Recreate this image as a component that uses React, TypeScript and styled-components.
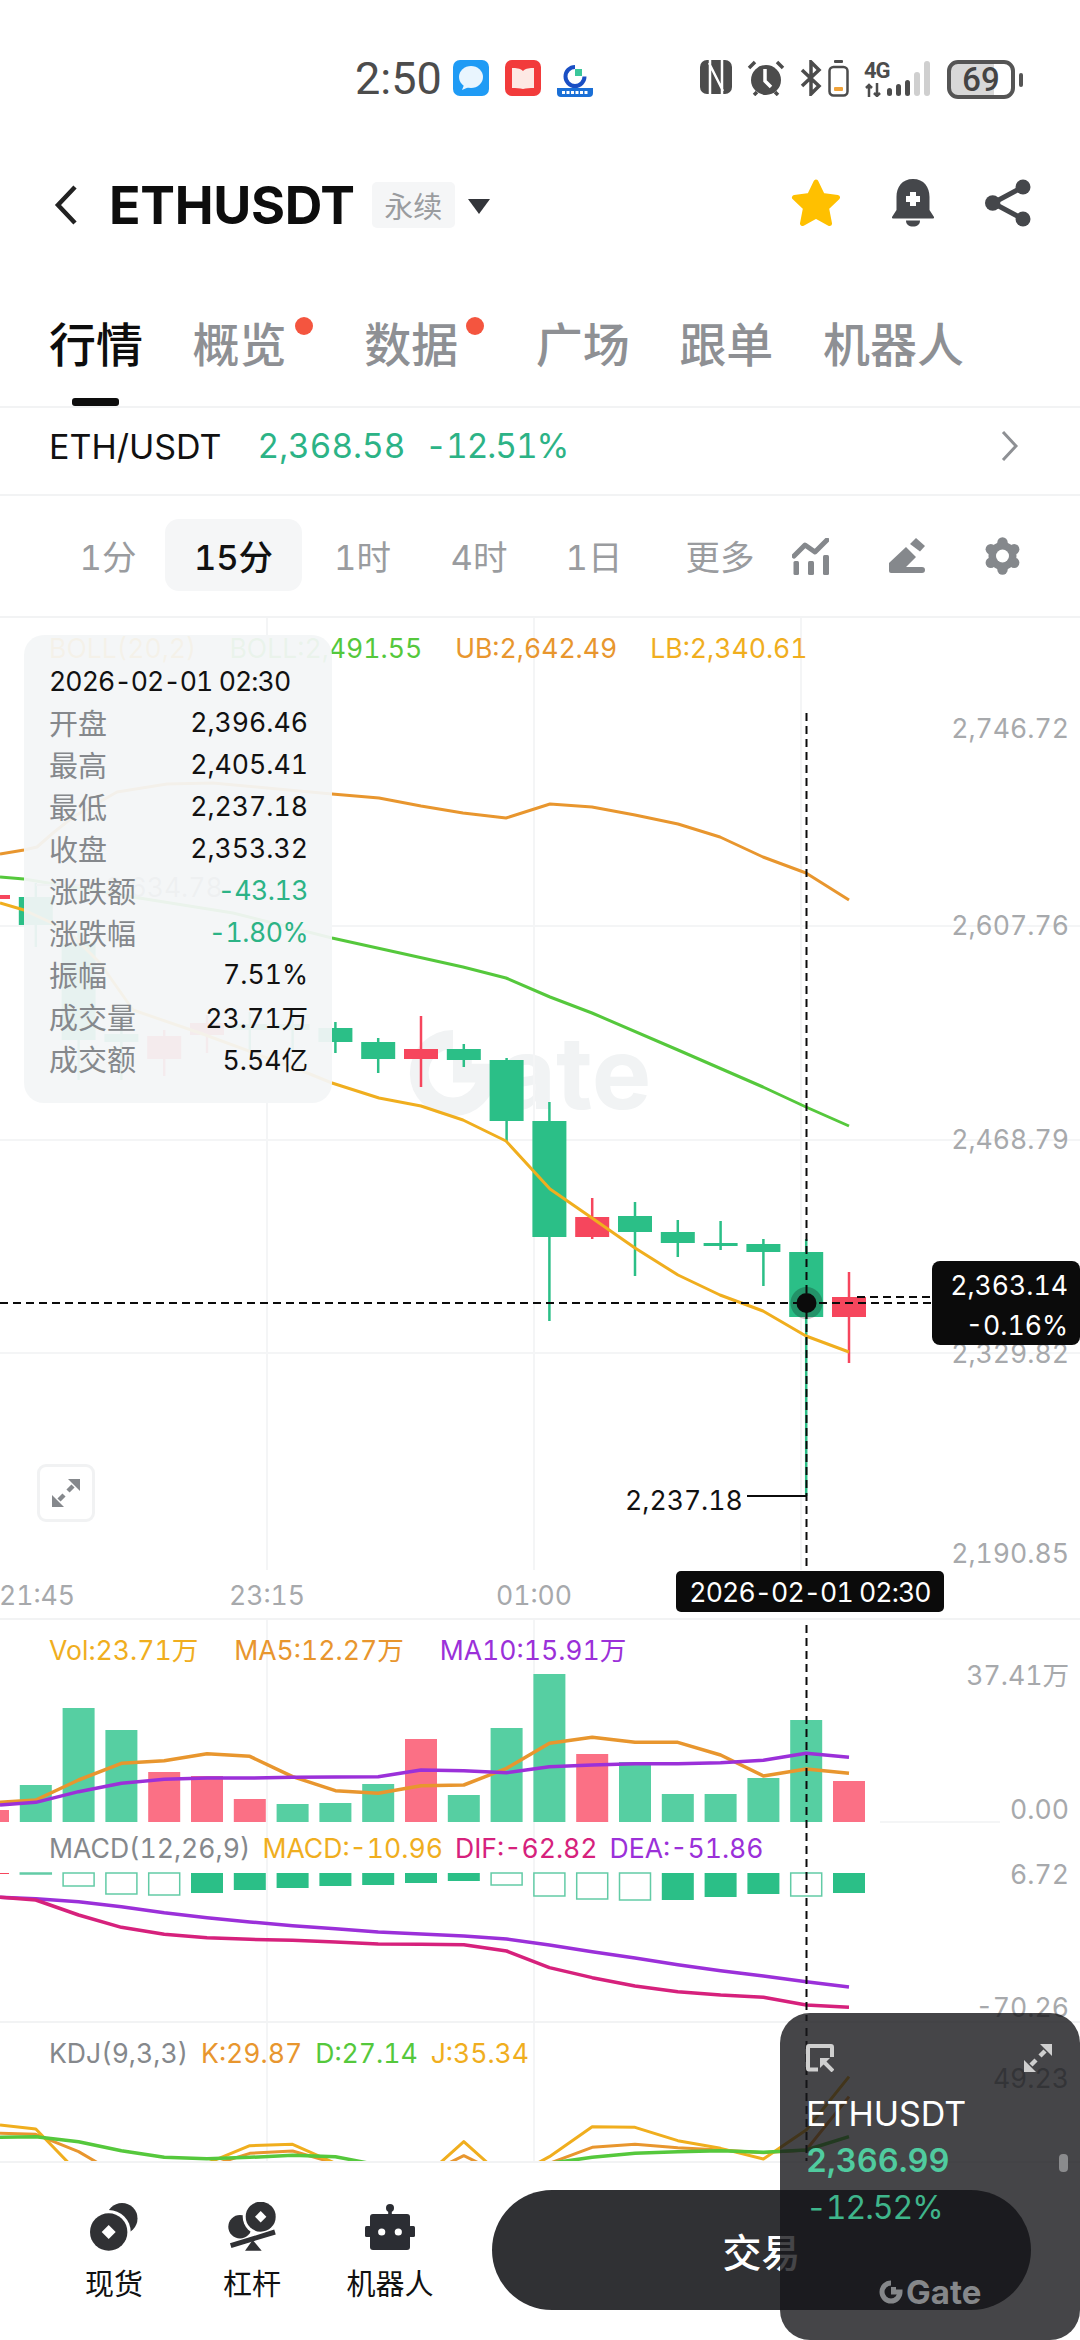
import styled, { createGlobalStyle } from "styled-components";

const UI_FONT = `Inter, "Noto Sans CJK SC", sans-serif`;

const GlobalStyle = createGlobalStyle`
  html, body { margin: 0; padding: 0; background: #fff; }
  * { box-sizing: border-box; }
  body { font-family: ${UI_FONT}; font-variant-numeric: tabular-nums; }
`;

const Page = styled.div`
  position: relative;
  width: 1080px;
  height: 2340px;
  overflow: hidden;
  background: #fff;
  display: flex;
  flex-direction: column;
`;

/* status bar */
const StatusBar = styled.div`
  height: 156px;
  flex: none;
  display: flex;
  align-items: flex-start;
  padding: 60px 0 0 355px;
`;
const Clock = styled.div`
  width: 98px;
  font-family: Roboto, sans-serif;
  font-size: 45px;
  line-height: 38px;
  color: #4c4c4c;
`;
const AppIcons = styled.div`
  display: flex;
  gap: 16px;
  width: 247px;
`;
const SysIcons = styled.div`
  display: flex;
  align-items: flex-start;
  gap: 15px;
`;
const SignalGroup = styled.div`
  display: flex;
  flex-direction: column;
  width: 26px;
`;
const NetLabel = styled.div`
  font-family: Roboto, sans-serif;
  font-weight: 700;
  font-size: 22px;
  line-height: 22px;
  letter-spacing: -1px;
  color: #4c4c4c;
`;
const Battery = styled.div`
  position: relative;
  width: 68px;
  height: 39px;
  margin-left: 1px;
  border: 4px solid #555;
  border-radius: 11px;
  display: flex;
  align-items: center;
  justify-content: center;
  font-family: Roboto, sans-serif;
  font-size: 33px;
  font-weight: 500;
  color: #444;
  background: linear-gradient(90deg, #d8d8d8 72%, #fff 72%);
  &::after {
    content: "";
    position: absolute;
    right: -12px;
    top: 9px;
    width: 4px;
    height: 14px;
    border-radius: 2px;
    background: #555;
  }
`;

/* title row */
const Header = styled.div`
  height: 98px;
  flex: none;
  display: flex;
  align-items: center;
  padding-left: 54px;
`;
const Symbol = styled.div`
  margin-left: 31px;
  font-size: 52px;
  font-weight: 700;
  color: #0d0d0d;
  letter-spacing: -0.3px;
`;
const Tag = styled.div`
  margin-left: 17px;
  width: 83px;
  height: 46px;
  border-radius: 5px;
  background: #f5f6f7;
  color: #9a9c9f;
  font-size: 29px;
  display: flex;
  align-items: center;
  justify-content: center;
`;
const Caret = styled.div`
  margin-left: 13px;
  margin-top: 3px;
  border-left: 11px solid transparent;
  border-right: 11px solid transparent;
  border-top: 15px solid #33353a;
`;
const HeaderActions = styled.div`
  margin-left: auto;
  margin-top: -4px;
  padding-right: 49px;
  display: flex;
  align-items: center;
  gap: 51px;
`;

/* tabs */
const Tabs = styled.div`
  position: relative;
  height: 154px;
  flex: none;
  display: flex;
  gap: 49.6px;
  padding: 67px 0 0 49px;
  border-bottom: 2px solid #f2f3f4;
`;
const Tab = styled.div<{ $active?: boolean; $dot?: boolean }>`
  position: relative;
  font-size: 47px;
  line-height: 47px;
  font-weight: 500;
  color: ${({ $active }) => ($active ? "#0d0d0d" : "#8e9094")};
  padding-right: ${({ $dot }) => ($dot ? "28px" : "0")};
  ${({ $dot }) =>
    $dot &&
    `&::after {
      content: "";
      position: absolute;
      right: 2px;
      top: -4px;
      width: 18px;
      height: 18px;
      border-radius: 50%;
      background: #f4553f;
    }`}
`;
const TabMark = styled.div`
  position: absolute;
  left: 72px;
  bottom: 0;
  width: 47px;
  height: 8px;
  border-radius: 3px;
  background: #0d0d0d;
`;

/* ticker */
const Ticker = styled.div`
  height: 88px;
  flex: none;
  display: flex;
  align-items: center;
  padding: 0 62px 10px 49px;
  border-bottom: 2px solid #f2f3f4;
  font-size: 33.4px;
`;
const TickerName = styled.span`
  font-size: 34px;
  color: #111;
`;
const TickerValue = styled.span<{ $gap: number; $tight?: boolean }>`
  margin-left: ${({ $gap }) => $gap}px;
  color: #2cb386;
  letter-spacing: ${({ $tight }) => ($tight ? "-1px" : "0")};
`;
const TickerArrow = styled.div`
  margin-left: auto;
  display: flex;
`;

/* intervals */
const Intervals = styled.div`
  height: 122px;
  flex: none;
  position: relative;
  display: flex;
  align-items: center;
  padding: 0 0 0 51px;
  border-bottom: 2px solid #f2f3f4;
`;
const Interval = styled.div<{ $active?: boolean; $w: number }>`
  width: ${({ $w }) => $w}px;
  height: 72px;
  margin-top: -2px;
  border-radius: 14px;
  display: flex;
  align-items: center;
  justify-content: center;
  font-size: 34.5px;
  font-weight: ${({ $active }) => ($active ? 500 : 400)};
  color: ${({ $active }) => ($active ? "#111" : "#9a9c9f")};
  background: ${({ $active }) => ($active ? "#f5f6f7" : "transparent")};
`;
const IntervalTools = styled.div`
  margin-left: auto;
  padding-right: 60px;
  display: flex;
  align-items: center;
  gap: 60px;
`;

/* chart */
const ChartArea = styled.div`
  position: relative;
  height: 1543px;
  flex: none;
  overflow: hidden;
  display: flex;
  flex-direction: column;
`;
const ChartSvg = styled.svg`
  position: absolute;
  left: 0;
  top: 0;
`;
const Watermark = styled.div`
  position: absolute;
  left: 408px;
  top: 400px;
  display: flex;
  align-items: center;
  gap: 0;
  font-size: 100px;
  line-height: 110px;
  font-weight: 700;
  color: #f1f3f4;
`;
const Panel = styled.div<{ $h: number; $pad: number; $line?: boolean }>`
  position: relative;
  height: ${({ $h }) => $h}px;
  flex: none;
  padding: ${({ $pad }) => $pad}px 0 0 49px;
  border-top: ${({ $line }) => ($line ? "2px solid #f2f3f4" : "none")};
`;
const Legend = styled.div<{ $gap: number }>`
  display: flex;
  gap: ${({ $gap }) => $gap}px;
  font-size: 26.6px;
  line-height: 34px;
  white-space: nowrap;
`;
const LegendItem = styled.span<{ $color: string }>`
  color: ${({ $color }) => $color};
`;
const AxisLabel = styled.div<{ $y: number }>`
  position: absolute;
  right: 11px;
  top: ${({ $y }) => $y - 618}px;
  transform: translateY(-50%);
  font-size: 26.6px;
  line-height: 34px;
  color: #a7a9ac;
`;
const TimeLabel = styled.div<{ $x: number }>`
  position: absolute;
  left: ${({ $x }) => $x}px;
  top: 960px;
  transform: translateX(-50%);
  font-size: 26.6px;
  line-height: 34px;
  color: #a7a9ac;
`;
const TimeChip = styled.div`
  position: absolute;
  left: 676px;
  top: 953px;
  width: 268px;
  height: 41px;
  border-radius: 5px;
  background: #0b0b0b;
  color: #fff;
  font-size: 26.6px;
  letter-spacing: -0.9px;
  display: flex;
  align-items: center;
  justify-content: center;
`;
const PriceChip = styled.div`
  position: absolute;
  right: 0;
  top: 643px;
  width: 148px;
  height: 84px;
  padding: 4px 12px 0 0;
  border-radius: 8px;
  background: #0b0b0b;
  color: #fff;
  font-size: 26.6px;
  line-height: 40px;
  text-align: right;
`;
const LowLabel = styled.div`
  position: absolute;
  left: 625px;
  top: 865px;
  font-size: 26.6px;
  line-height: 34px;
  color: #111;
`;
const HighLabel = styled.div`
  position: absolute;
  left: 105px;
  top: 252px;
  font-size: 26.6px;
  line-height: 34px;
  color: #9a9c9f;
`;
const ExpandButton = styled.div`
  position: absolute;
  left: 37px;
  top: 846px;
  width: 58px;
  height: 58px;
  border: 3px solid #f1f2f3;
  border-radius: 9px;
  background: #fff;
  display: flex;
  align-items: center;
  justify-content: center;
`;

/* crosshair tooltip */
const Tooltip = styled.div`
  position: absolute;
  left: 24px;
  top: 17px;
  width: 308px;
  height: 468px;
  padding: 26px 24px 0 25px;
  border-radius: 20px;
  background: rgba(243, 245, 247, 0.94);
`;
const TooltipDate = styled.div`
  font-size: 26.6px;
  line-height: 40px;
  letter-spacing: -0.9px;
  white-space: nowrap;
  color: #111;
`;
const TooltipRow = styled.div`
  display: flex;
  justify-content: space-between;
  height: 42px;
  align-items: center;
`;
const TooltipKey = styled.span`
  font-size: 29px;
  color: #85888c;
`;
const TooltipValue = styled.span<{ $down?: boolean }>`
  font-size: 26.6px;
  letter-spacing: ${({ $down }) => ($down ? "-0.5px" : "0")};
  color: ${({ $down }) => ($down ? "#2cb386" : "#111")};
`;

/* bottom actions */
const BottomBar = styled.div`
  height: 179px;
  flex: none;
  display: flex;
  align-items: flex-start;
  padding: 27px 0 0 45px;
  border-top: 2px solid #f2f3f4;
  background: #fff;
`;
const NavItem = styled.div`
  width: 138px;
  display: flex;
  flex-direction: column;
  align-items: center;
  gap: 13px;
  padding-top: 12px;
  font-size: 29px;
  line-height: 40px;
  color: #111;
`;
const NavGlyph = styled.div`
  height: 50px;
  display: flex;
  align-items: center;
`;
const TradeButton = styled.div`
  margin-left: 33px;
  width: 539px;
  height: 120px;
  border-radius: 60px;
  background: #303134;
  color: #fff;
  font-size: 39px;
  font-weight: 500;
  display: flex;
  align-items: center;
  justify-content: center;
`;

/* floating price window */
const PipWindow = styled.div`
  position: absolute;
  left: 780px;
  top: 2013px;
  width: 300px;
  height: 327px;
  padding: 31px 28px 0 26px;
  border-radius: 30px;
  background: rgba(22, 23, 26, 0.8);
  display: flex;
  flex-direction: column;
`;
const PipIcons = styled.div`
  display: flex;
  justify-content: space-between;
  height: 28px;
`;
const PipName = styled.div`
  margin-top: 18px;
  font-size: 34px;
  line-height: 48px;
  color: #fff;
`;
const PipPrice = styled.div`
  font-size: 32.5px;
  line-height: 46px;
  font-weight: 600;
  color: #50cb9f;
`;
const PipChange = styled.div`
  font-size: 32px;
  line-height: 48px;
  letter-spacing: -1px;
  color: #3fb58b;
`;
const PipBrand = styled.div`
  position: absolute;
  left: 99px;
  top: 264px;
  display: flex;
  align-items: center;
  gap: 3px;
  font-size: 33px;
  line-height: 30px;
  font-weight: 700;
  color: #85878a;
`;
const PipScroll = styled.div`
  position: absolute;
  right: 12px;
  top: 141px;
  width: 9px;
  height: 18px;
  border-radius: 4px;
  background: #8a8b8d;
`;

/* chart data, in page pixels */
const GREEN = "#2bbf87";
const RED = "#f6465d";
const ORANGE = "#e8962e";
const YELLOW = "#f0ae1e";
const LIME = "#55c83c";
const PURPLE = "#9b30d9";
const MAGENTA = "#d6217c";

const xAt = (i: number) => 849 - 42.8 * (20 - i);

type Candle = { i: number; top: number; bottom: number; hi: number; lo: number; up?: boolean };
const candles: Candle[] = [
  { i: 0, top: 895, bottom: 899, hi: 893, lo: 900, up: true },
  { i: 1, top: 897, bottom: 925, hi: 883, lo: 947 },
  { i: 2, top: 943, bottom: 1040, hi: 930, lo: 1080 },
  { i: 3, top: 1034, bottom: 1042, hi: 1020, lo: 1080 },
  { i: 4, top: 1036, bottom: 1059, hi: 1030, lo: 1076, up: true },
  { i: 5, top: 1023, bottom: 1035, hi: 1015, lo: 1053, up: true },
  { i: 6, top: 1024, bottom: 1030, hi: 1012, lo: 1053 },
  { i: 7, top: 1024, bottom: 1030, hi: 1012, lo: 1053 },
  { i: 8, top: 1028, bottom: 1042, hi: 1022, lo: 1053 },
  { i: 9, top: 1042, bottom: 1059, hi: 1038, lo: 1073 },
  { i: 10, top: 1049, bottom: 1059, hi: 1016, lo: 1087, up: true },
  { i: 11, top: 1049, bottom: 1060, hi: 1044, lo: 1067 },
  { i: 12, top: 1060, bottom: 1121, hi: 1058, lo: 1141 },
  { i: 13, top: 1121, bottom: 1237, hi: 1102, lo: 1321 },
  { i: 14, top: 1217, bottom: 1237, hi: 1198, lo: 1239, up: true },
  { i: 15, top: 1216, bottom: 1232, hi: 1202, lo: 1276 },
  { i: 16, top: 1232, bottom: 1243, hi: 1220, lo: 1257 },
  { i: 17, top: 1243, bottom: 1246, hi: 1221, lo: 1250 },
  { i: 18, top: 1244, bottom: 1252, hi: 1239, lo: 1286 },
  { i: 19, top: 1252, bottom: 1317, hi: 1239, lo: 1496 },
  { i: 20, top: 1297, bottom: 1317, hi: 1272, lo: 1363, up: true },
];

const upperBand = "0,854 24,850 37,847 53,833 73,817 117,792 167,784 213,783 267,788 332,794 379,798 421,806 463,813 506,818 550,804 592,807 635,815 678,824 720,837 763,857 806,873 849,900";
const midBand = "0,877 24,879 133,897 233,913 332,938 400,953 463,967 506,978 550,997 592,1013 678,1050 763,1087 806,1107 849,1126";
const lowerBand = "0,903 24,910 67,930 100,963 133,1010 200,1033 300,1070 332,1083 379,1098 421,1106 463,1120 506,1141 550,1189 592,1218 635,1248 678,1275 720,1295 763,1311 806,1336 849,1352";

const VOL_BASE = 1822;
const volumes: [number, boolean][] = [
  [1810, true], [1785, false], [1708, false], [1730, false], [1772, true], [1776, true], [1799, true],
  [1804, false], [1803, false], [1784, false], [1739, true], [1795, false], [1728, false], [1674, false],
  [1754, true], [1762, false], [1794, false], [1794, false], [1778, false], [1720, false], [1781, true],
];
const MACD_BASE = 1873;
const macdBars: [number, boolean][] = [
  [1874, true], [1874, false], [1886, false], [1894, false], [1895, false], [1893, true], [1890, true],
  [1888, true], [1886, true], [1885, true], [1883, true], [1881, true], [1885, false], [1896, false],
  [1899, false], [1900, false], [1900, true], [1897, true], [1894, true], [1896, false], [1893, true],
];

// line points read panel by panel: y offset from the panel's top row, tripled
const tripled = (rows: number[], top: number) =>
  rows.map((v, i) => `${xAt(i) + (i === 0 ? 7 : 0)},${top + v / 3}`).join(" ");

const volMa5 = tripled([547, 540, 480, 430, 422, 401, 409, 470, 512, 520, 497, 495, 445, 370, 352, 367, 367, 405, 468, 447, 460], 1620);
const volMa10 = tripled([555, 547, 515, 490, 478, 474, 474, 472, 471, 470, 450, 452, 458, 440, 435, 431, 431, 428, 421, 400, 412], 1620);
const macdDea = tripled([832, 836, 845, 860, 878, 893, 906, 917, 926, 936, 942, 948, 957, 975, 995, 1014, 1034, 1052, 1068, 1085, 1101], 1620);
const macdDif = tripled([832, 840, 885, 922, 943, 953, 958, 961, 966, 972, 973, 974, 993, 1043, 1073, 1098, 1115, 1125, 1132, 1155, 1162], 1620);
const kdjJ = tripled([495, 507, 640, 700, 700, 610, 557, 553, 610, 660, 660, 545, 660, 590, 500, 502, 542, 565, 597, 510, 350], 1960);
const kdjK = tripled([520, 523, 575, 650, 650, 620, 580, 573, 610, 650, 650, 587, 650, 610, 562, 553, 563, 570, 578, 570, 410], 1960);
const kdjD = tripled([532, 530, 545, 572, 592, 596, 592, 586, 590, 615, 650, 650, 650, 610, 592, 580, 575, 572, 577, 570, 530], 1960);

function Chart() {
  return (
    <ChartSvg width="1080" height="1543" viewBox="0 618 1080 1543">
      <g stroke="#f4f5f6" strokeWidth="2">
        <line x1="0" x2="1080" y1="926" y2="926" />
        <line x1="0" x2="1080" y1="1140" y2="1140" />
        <line x1="0" x2="1080" y1="1353" y2="1353" />
        <line x1="267" x2="267" y1="618" y2="1570" />
        <line x1="534" x2="534" y1="618" y2="1570" />
        <line x1="801" x2="801" y1="618" y2="1570" />
        <line x1="267" x2="267" y1="1620" y2="2161" />
        <line x1="534" x2="534" y1="1620" y2="2161" />
        <line x1="880" x2="1000" y1="1822" y2="1822" />
      </g>

      {candles.map((c) => {
        const color = c.up ? RED : GREEN;
        return (
          <g key={c.i}>
            <line x1={xAt(c.i)} x2={xAt(c.i)} y1={c.hi} y2={c.lo} stroke={color} strokeWidth="2.5" />
            <rect x={xAt(c.i) - 17} y={c.top} width="34" height={c.bottom - c.top} fill={color} />
          </g>
        );
      })}
      <g fill="none" strokeWidth="3" strokeLinejoin="round">
        <polyline points={upperBand} stroke={ORANGE} />
        <polyline points={midBand} stroke={LIME} />
        <polyline points={lowerBand} stroke={YELLOW} />
      </g>
      <line x1="36" x2="100" y1="885" y2="885" stroke="#b5b5b5" strokeWidth="2" />

      {volumes.map(([top, isUp], i) => (
        <rect key={i} x={xAt(i) - 16} y={top} width="32" height={VOL_BASE - top} fill={isUp ? "#fb7085" : "#56cfa2"} />
      ))}
      <g fill="none" strokeWidth="3.5" strokeLinejoin="round">
        <polyline points={volMa5} stroke={ORANGE} />
        <polyline points={volMa10} stroke={PURPLE} />
      </g>

      {macdBars.map(([bottom, solid], i) => {
        const stroke = i === 0 ? RED : GREEN;
        const h = Math.max(bottom - MACD_BASE, 1);
        return solid ? (
          <rect key={i} x={xAt(i) - 16} y={MACD_BASE} width="32" height={h} fill={stroke} />
        ) : (
          <rect key={i} x={xAt(i) - 15.5} y={MACD_BASE} width="31" height={h} fill="#fff" stroke="#63cba6" strokeWidth="1.5" />
        );
      })}
      <g fill="none" strokeWidth="3.5" strokeLinejoin="round">
        <polyline points={macdDea} stroke={PURPLE} />
        <polyline points={macdDif} stroke={MAGENTA} />
      </g>

      <g fill="none" strokeWidth="3" strokeLinejoin="round">
        <polyline points={kdjK} stroke={ORANGE} />
        <polyline points={kdjJ} stroke={YELLOW} />
        <polyline points={kdjD} stroke={LIME} strokeWidth="3.5" />
      </g>

      <g stroke="#0b0b0b" strokeWidth="2" strokeDasharray="8 5">
        <line x1="806.5" x2="806.5" y1="713" y2="1570" />
        <line x1="806.5" x2="806.5" y1="1625" y2="2161" />
        <line x1="0" x2="932" y1="1303" y2="1303" />
        <line x1="857" x2="932" y1="1297" y2="1297" />
      </g>
      <line x1="747" x2="806" y1="1496" y2="1496" stroke="#0b0b0b" strokeWidth="2" />
      <circle cx="806.5" cy="1303" r="16" fill="#0b0b0b" opacity="0.25" />
      <circle cx="806.5" cy="1303" r="10" fill="#0b0b0b" />
    </ChartSvg>
  );
}

function ExpandGlyph({ color, size }: { color: string; size: number }) {
  return (
    <svg width={size} height={size} viewBox="0 0 28 28" fill={color}>
      <polygon points="28,0 28,12 16,0" />
      <polygon points="0,28 0,16 12,28" />
      <line x1="21" y1="7" x2="16" y2="12" stroke={color} strokeWidth="4.5" />
      <line x1="7" y1="21" x2="12" y2="16" stroke={color} strokeWidth="4.5" />
    </svg>
  );
}

function GateRing({ size, color }: { size: number; color: string }) {
  return (
    <svg width={size} height={size} viewBox="0 0 24 24">
      <path d="M12 3a9 9 0 1 0 9 9h-9" fill="none" stroke={color} strokeWidth="5" />
      <rect x="12" y="7" width="5" height="5" fill={color} />
    </svg>
  );
}

const GEAR_TEETH = [0, 60, 120, 180, 240, 300].map((deg) => {
  const r = (deg * Math.PI) / 180;
  return { cx: 17.5 + 13.5 * Math.sin(r), cy: 19 - 13.5 * Math.cos(r) };
});

const tooltipRows: [string, string, boolean?][] = [
  ["开盘", "2,396.46"],
  ["最高", "2,405.41"],
  ["最低", "2,237.18"],
  ["收盘", "2,353.32"],
  ["涨跌额", "-43.13", true],
  ["涨跌幅", "-1.80%", true],
  ["振幅", "7.51%"],
  ["成交量", "23.71万"],
  ["成交额", "5.54亿"],
];

const intervals: [string, number, boolean?][] = [
  ["1分", 114],
  ["15分", 137, true],
  ["1时", 121],
  ["4时", 112],
  ["1日", 118],
  ["更多", 134],
];

export default function App() {
  return (
    <Page>
      <GlobalStyle />
      <StatusBar>
        <Clock>2:50</Clock>
        <AppIcons>
          <svg width="36" height="36" viewBox="0 0 36 36">
            <rect width="36" height="36" rx="7" fill="#1f9bf5" />
            <ellipse cx="18" cy="17" rx="12" ry="11" fill="#e9f5fe" />
            <path d="M11 25l-2 5 7-3z" fill="#e9f5fe" />
          </svg>
          <svg width="36" height="36" viewBox="0 0 36 36">
            <rect width="36" height="36" rx="7" fill="#f23b3b" />
            <path d="M7 8c4 0 8 0 11 3 3-3 7-3 11-3v20c-4 0-8 0-11 1-3-1-7-1-11-1z" fill="#fde9e4" />
          </svg>
          <svg width="36" height="33" viewBox="0 0 36 33" style={{ marginTop: 4 }}>
            <path d="M18 3a9.5 9.5 0 1 0 9.5 9.5" fill="none" stroke="#1a4fc4" strokeWidth="4" />
            <rect x="18" y="5" width="7" height="7" fill="#3bc79b" />
            <path d="M0 24h36v5a4 4 0 0 1-4 4H4a4 4 0 0 1-4-4z" fill="#1a6fd6" />
            <line x1="5" x2="31" y1="28.5" y2="28.5" stroke="#fff" strokeWidth="3" strokeDasharray="3 1.5" />
          </svg>
        </AppIcons>
        <SysIcons>
          <svg width="32" height="34" viewBox="0 0 32 34">
            <rect width="32" height="34" rx="7" fill="#4c4c4c" />
            <path d="M10 0v34M22 0v34M9 3l14 28" stroke="#fff" strokeWidth="2.5" fill="none" />
          </svg>
          <svg width="38" height="36" viewBox="0 0 38 36">
            <circle cx="19" cy="20" r="15" fill="#4c4c4c" />
            <path d="M18 9v12l6 6" stroke="#fff" strokeWidth="3.5" fill="none" />
            <path d="M2 8l6-6M36 8l-6-6M7 35l3-3M31 35l-3-3" stroke="#4c4c4c" strokeWidth="3.5" />
          </svg>
          <svg width="22" height="36" viewBox="0 0 22 36" style={{ marginRight: -9 }}>
            <path d="M2 10l17 16-8 8V2l8 8L2 26" stroke="#4c4c4c" strokeWidth="3.5" fill="none" />
          </svg>
          <svg width="21" height="37" viewBox="0 0 21 37">
            <rect x="6" y="0" width="9" height="3" rx="1" fill="#4c4c4c" />
            <rect x="1.5" y="7" width="18" height="28.5" rx="4" fill="none" stroke="#4c4c4c" strokeWidth="2.5" />
            <rect x="6" y="27" width="9" height="4" rx="1" fill="#f0a33a" />
          </svg>
          <SignalGroup>
            <NetLabel>4G</NetLabel>
            <svg width="26" height="15" viewBox="0 0 26 15">
              <path d="M5 15V3M2 6l3-3 3 3M13 1v13M10 11l3 3 3-3" stroke="#4c4c4c" strokeWidth="2.5" fill="none" />
            </svg>
          </SignalGroup>
          <svg width="44" height="38" viewBox="0 0 44 38" style={{ marginLeft: -18 }}>
            <g fill="#4c4c4c">
              <rect x="0" y="28" width="5" height="8" rx="2.5" />
              <rect x="9" y="24" width="5" height="12" rx="2.5" />
              <rect x="18" y="20" width="5" height="16" rx="2.5" />
            </g>
            <rect x="27" y="12" width="6" height="24" rx="3" fill="#cfcfcf" />
            <rect x="37" y="1" width="6" height="35" rx="3" fill="#cfcfcf" />
          </svg>
          <Battery>69</Battery>
        </SysIcons>
      </StatusBar>

      <Header>
        <svg width="24" height="40" viewBox="0 0 24 40">
          <polyline points="21,2 4,20 21,38" fill="none" stroke="#222" strokeWidth="4.5" />
        </svg>
        <Symbol>ETHUSDT</Symbol>
        <Tag>永续</Tag>
        <Caret />
        <HeaderActions>
          <svg width="50" height="48" viewBox="0 0 50 48">
            <polygon
              points="25,3 31.5,16.5 46.5,18.5 35.5,29 38.5,44.5 25,37 11.5,44.5 14.5,29 3.5,18.5 18.5,16.5"
              fill="#ffc000"
              stroke="#ffc000"
              strokeWidth="5"
              strokeLinejoin="round"
            />
          </svg>
          <svg width="42" height="48" viewBox="0 0 42 48">
            <path
              d="M21 0C10 0 4.5 8 4.5 18v13L0 38a1 1 0 0 0 1 1.5h40a1 1 0 0 0 1-1.5l-4.5-7V18C37.5 8 32 0 21 0z"
              fill="#45474b"
            />
            <path d="M14 41.5h14c0 4-3 6-7 6s-7-2-7-6z" fill="#45474b" />
            <path d="M21 13v14M14 20h14" stroke="#fff" strokeWidth="6" />
          </svg>
          <svg width="46" height="48" viewBox="0 0 46 48">
            <path d="M38 8L8 24l30 16" fill="none" stroke="#45474b" strokeWidth="5" />
            <circle cx="38" cy="8" r="7.5" fill="#45474b" />
            <circle cx="7.7" cy="24" r="7.7" fill="#45474b" />
            <circle cx="38" cy="40" r="7.5" fill="#45474b" />
          </svg>
        </HeaderActions>
      </Header>

      <Tabs>
        <Tab $active>行情</Tab>
        <Tab $dot>概览</Tab>
        <Tab $dot>数据</Tab>
        <Tab>广场</Tab>
        <Tab>跟单</Tab>
        <Tab>机器人</Tab>
        <TabMark />
      </Tabs>

      <Ticker>
        <TickerName>ETH/USDT</TickerName>
        <TickerValue $gap={36}>2,368.58</TickerValue>
        <TickerValue $gap={20} $tight>-12.51%</TickerValue>
        <TickerArrow>
          <svg width="17" height="30" viewBox="0 0 17 30">
            <polyline points="2,1 15,15 2,29" fill="none" stroke="#8e9094" strokeWidth="3" />
          </svg>
        </TickerArrow>
      </Ticker>

      <Intervals>
        {intervals.map(([label, w, active]) => (
          <Interval key={label} $w={w} $active={active}>
            {label}
          </Interval>
        ))}
        <IntervalTools>
          <svg width="37" height="37" viewBox="0 0 37 37">
            <polyline points="2,18 13,7 23,14 35,2" fill="none" stroke="#85888c" strokeWidth="5" strokeLinecap="round" strokeLinejoin="round" />
            <g fill="#85888c">
              <rect x="1.5" y="23" width="5.5" height="14" rx="1.5" />
              <rect x="16" y="23" width="6" height="14" rx="1.5" />
              <rect x="31" y="17" width="6" height="20" rx="1.5" />
            </g>
          </svg>
          <svg width="36" height="36" viewBox="0 0 36 36">
            <path d="M0 25L17 9l10 10-10 10h16a3 3 0 0 1 0 6H2a2 2 0 0 1-2-2z" fill="#85888c" />
            <polygon points="21,6 27,0 36,8 31,13.5" fill="#85888c" />
          </svg>
          <svg width="35" height="38" viewBox="0 0 35 38">
            <circle cx="17.5" cy="19" r="14" fill="#85888c" />
            {GEAR_TEETH.map((t) => (
              <circle key={t.cx + t.cy} cx={t.cx} cy={t.cy} r="5.2" fill="#85888c" />
            ))}
            <circle cx="17.5" cy="19" r="6.5" fill="#fff" />
          </svg>
        </IntervalTools>
      </Intervals>

      <ChartArea>
        <Watermark>
          <GateRing size={90} color="#f1f3f4" />
          ate
        </Watermark>
        <Chart />
        <Panel $h={1000} $pad={13}>
          <Legend $gap={33}>
            <LegendItem $color={YELLOW}>BOLL(20,2)</LegendItem>
            <LegendItem $color={LIME}>BOLL:2,491.55</LegendItem>
            <LegendItem $color={ORANGE}>UB:2,642.49</LegendItem>
            <LegendItem $color={YELLOW}>LB:2,340.61</LegendItem>
          </Legend>
        </Panel>
        <Panel $h={207} $pad={13} $line>
          <Legend $gap={36}>
            <LegendItem $color={YELLOW}>Vol:23.71万</LegendItem>
            <LegendItem $color={ORANGE}>MA5:12.27万</LegendItem>
            <LegendItem $color={PURPLE}>MA10:15.91万</LegendItem>
          </Legend>
        </Panel>
        <Panel $h={196} $pad={6}>
          <Legend $gap={12}>
            <LegendItem $color="#85888c">MACD(12,26,9)</LegendItem>
            <LegendItem $color={YELLOW}>MACD:-10.96</LegendItem>
            <LegendItem $color={MAGENTA}>DIF:-62.82</LegendItem>
            <LegendItem $color={PURPLE}>DEA:-51.86</LegendItem>
          </Legend>
        </Panel>
        <Panel $h={140} $pad={13} $line>
          <Legend $gap={13}>
            <LegendItem $color="#85888c">KDJ(9,3,3)</LegendItem>
            <LegendItem $color={ORANGE}>K:29.87</LegendItem>
            <LegendItem $color={LIME}>D:27.14</LegendItem>
            <LegendItem $color={YELLOW}>J:35.34</LegendItem>
          </Legend>
        </Panel>

        <AxisLabel $y={728}>2,746.72</AxisLabel>
        <AxisLabel $y={925}>2,607.76</AxisLabel>
        <AxisLabel $y={1139}>2,468.79</AxisLabel>
        <AxisLabel $y={1353}>2,329.82</AxisLabel>
        <AxisLabel $y={1553}>2,190.85</AxisLabel>
        <AxisLabel $y={1675}>37.41万</AxisLabel>
        <AxisLabel $y={1809}>0.00</AxisLabel>
        <AxisLabel $y={1874}>6.72</AxisLabel>
        <AxisLabel $y={2007}>-70.26</AxisLabel>
        <AxisLabel $y={2078}>49.23</AxisLabel>
        <TimeLabel $x={37}>21:45</TimeLabel>
        <TimeLabel $x={267}>23:15</TimeLabel>
        <TimeLabel $x={534}>01:00</TimeLabel>
        <TimeChip>2026-02-01 02:30</TimeChip>
        <PriceChip>
          2,363.14
          <br />
          -0.16%
        </PriceChip>
        <LowLabel>2,237.18</LowLabel>
        <HighLabel>2,634.78</HighLabel>
        <ExpandButton>
          <ExpandGlyph color="#85888c" size={28} />
        </ExpandButton>

        <Tooltip>
          <TooltipDate>2026-02-01 02:30</TooltipDate>
          {tooltipRows.map(([key, value, down]) => (
            <TooltipRow key={key}>
              <TooltipKey>{key}</TooltipKey>
              <TooltipValue $down={down}>{value}</TooltipValue>
            </TooltipRow>
          ))}
        </Tooltip>
      </ChartArea>

      <BottomBar>
        <NavItem>
          <NavGlyph>
            <svg width="48" height="48" viewBox="0 0 48 48">
              <circle cx="32" cy="15.5" r="15.5" fill="#303134" />
              <circle cx="18.7" cy="29" r="22" fill="#fff" />
              <circle cx="18.7" cy="29" r="18.7" fill="#303134" />
              <polygon points="18.7,22 25.7,29 18.7,36 11.7,29" fill="#fff" />
            </svg>
          </NavGlyph>
          现货
        </NavItem>
        <NavItem>
          <NavGlyph>
            <svg width="48" height="50" viewBox="0 0 48 50">
              <circle cx="12" cy="24.7" r="11.7" fill="#303134" />
              <circle cx="32.7" cy="14.7" r="18" fill="#fff" />
              <circle cx="32.7" cy="14.7" r="15" fill="#303134" />
              <polygon points="32.7,9 38.4,14.7 32.7,20.4 27,14.7" fill="#fff" />
              <path d="M2.7 43.7L47 30" stroke="#303134" strokeWidth="5" />
              <polygon points="24.7,38 33.7,48.7 17,48.7" fill="#303134" />
            </svg>
          </NavGlyph>
          杠杆
        </NavItem>
        <NavItem>
          <NavGlyph>
            <svg width="50" height="46" viewBox="0 0 50 46">
              <rect x="23.2" y="3" width="3.6" height="8" fill="#2b2d33" />
              <circle cx="25" cy="4" r="4" fill="#2b2d33" />
              <rect x="5" y="10" width="40" height="36" rx="3" fill="#2b2d33" />
              <rect x="0" y="22" width="6" height="11" rx="1.5" fill="#2b2d33" />
              <rect x="44" y="22" width="6" height="11" rx="1.5" fill="#2b2d33" />
              <circle cx="16.7" cy="28" r="3.6" fill="#fff" />
              <circle cx="33.3" cy="28" r="3.6" fill="#fff" />
            </svg>
          </NavGlyph>
          机器人
        </NavItem>
        <TradeButton>交易</TradeButton>
      </BottomBar>

      <PipWindow>
        <PipIcons>
          <svg width="28" height="28" viewBox="0 0 28 28">
            <path d="M12 25.5H3a1 1 0 0 1-1-1V3a1 1 0 0 1 1-1h22a1 1 0 0 1 1 1v10" fill="none" stroke="#cfcfcf" strokeWidth="4" />
            <polygon points="14,14 24,14 14,24" fill="#cfcfcf" />
            <line x1="18" y1="18" x2="27" y2="27" stroke="#cfcfcf" strokeWidth="4" />
          </svg>
          <ExpandGlyph color="#cfcfcf" size={28} />
        </PipIcons>
        <PipName>ETHUSDT</PipName>
        <PipPrice>2,366.99</PipPrice>
        <PipChange>-12.52%</PipChange>
        <PipBrand>
          <GateRing size={24} color="#85878a" />
          Gate
        </PipBrand>
        <PipScroll />
      </PipWindow>
    </Page>
  );
}
